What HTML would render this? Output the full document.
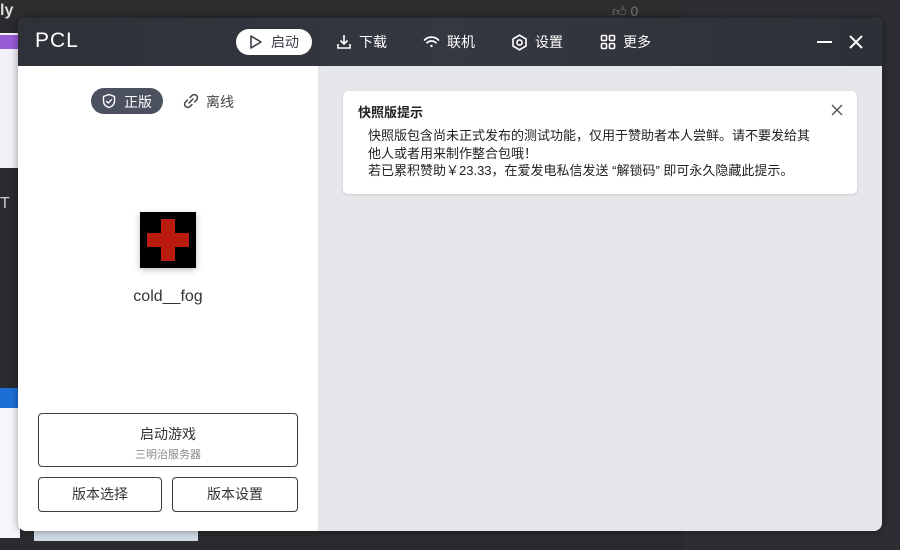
<!DOCTYPE html>
<html><head><meta charset="utf-8"><style>
*{margin:0;padding:0;box-sizing:border-box}
body{width:900px;height:550px;overflow:hidden;background:#2a2b2e;font-family:"Liberation Sans","Noto Sans CJK SC",sans-serif;position:relative}
.abs{position:absolute}
.win{left:18px;top:18px;width:864px;height:513px;border-radius:8px;overflow:hidden;background:#e6e7ea;box-shadow:0 0 8px rgba(0,0,0,.4)}
.title{left:0;top:0;width:864px;height:48px;background:linear-gradient(90deg,#2f3139,#353741 50%,#2e3038)}
.nav{color:#fff;font-size:14px;top:24px;display:flex;align-items:center;gap:7px;height:0}
.left{left:0;top:48px;width:300px;height:465px;background:#fff}
.btn{border:1px solid #3a3d44;border-radius:4px;background:#fff;color:#333;text-align:center;font-size:14px}
</style></head><body>
<div class="abs" style="left:0;top:0;width:900px;height:18px;background:#2d2d2f"></div>
<div class="abs" style="left:0;top:0;color:#ddd;font-weight:bold;font-size:16px;top:2px">ly</div>
<div class="abs" style="left:0;top:33px;width:20px;height:135px;background:#f4f0f8"></div>
<div class="abs" style="left:0;top:35px;width:20px;height:14px;background:#9a5bd6"></div>
<div class="abs" style="left:0;top:195px;color:#ccc;font-size:16px">T</div>
<div class="abs" style="left:0;top:388px;width:20px;height:150px;background:#f4f6fa"></div>
<div class="abs" style="left:0;top:388px;width:20px;height:20px;background:#1b6fd6"></div>
<div class="abs" style="left:34px;top:531px;width:164px;height:10px;background:#cfd9e6"></div>
<div class="abs" style="left:612px;top:3px;color:#777;font-size:14px">👍︎ 0</div>
<div class="abs" style="left:683px;top:0;width:217px;height:550px;background:#2c2e33"></div>

<div class="abs win">
 <div class="abs title">
  <div class="abs" style="left:17px;top:11px;color:#fff;font-size:21px;letter-spacing:1px">PCL</div>
  <div class="abs" style="left:218px;top:11px;width:76px;height:26px;border-radius:13px;background:#fff"></div>
  <div class="abs nav" style="left:230px;color:#3a3d46">
   <svg width="16" height="16" viewBox="0 0 16 16"><path d="M3 2 L13 8 L3 14 Z" fill="none" stroke="#3a3d46" stroke-width="1.6" stroke-linejoin="round"/></svg>启动</div>
  <div class="abs nav" style="left:318px">
   <svg width="16" height="16" viewBox="0 0 16 16" fill="none" stroke="#fff" stroke-width="1.6"><path d="M8 1v9M4.5 6.5 8 10l3.5-3.5M2 10v4h12v-4"/></svg>下载</div>
  <div class="abs nav" style="left:405px">
   <svg width="17" height="16" viewBox="0 0 17 16" fill="none" stroke="#fff" stroke-width="1.7" stroke-linecap="round"><path d="M1.5 6a10 10 0 0 1 14 0M4 8.8a6.5 6.5 0 0 1 9 0"/><circle cx="8.5" cy="12" r="1.2" fill="#fff" stroke="none"/></svg>联机</div>
  <div class="abs nav" style="left:493px">
   <svg width="17" height="17" viewBox="0 0 17 17" fill="none" stroke="#fff" stroke-width="1.6"><path d="M8.5 1.2 15 5v7l-6.5 3.8L2 12V5Z"/><circle cx="8.5" cy="8.5" r="2.6"/></svg>设置</div>
  <div class="abs nav" style="left:582px">
   <svg width="16" height="16" viewBox="0 0 16 16" fill="none" stroke="#fff" stroke-width="1.6"><rect x="1.5" y="1.5" width="5" height="5" rx="1"/><rect x="9.5" y="1.5" width="5" height="5" rx="1"/><rect x="1.5" y="9.5" width="5" height="5" rx="1"/><rect x="9.5" y="9.5" width="5" height="5" rx="1"/></svg>更多</div>
  <div class="abs" style="left:799px;top:23px;width:15px;height:2px;background:#fff"></div>
  <svg class="abs" style="left:831px;top:17px" width="14" height="14" viewBox="0 0 14 14" stroke="#fff" stroke-width="2"><path d="M1 1 13 13M13 1 1 13"/></svg>
 </div>
 <div class="abs left">
  <div class="abs" style="left:73px;top:22px;width:72px;height:26px;border-radius:13px;background:#4c5160"></div>
  <svg class="abs" style="left:83px;top:27px" width="16" height="16" viewBox="0 0 16 16" fill="none" stroke="#fff" stroke-width="1.4"><path d="M8 1.5 13.5 3.5v4.5c0 3.3-2.5 5.5-5.5 6.5-3-1-5.5-3.2-5.5-6.5V3.5Z"/><path d="M5.3 8 7.3 10 10.8 6.3"/></svg>
  <div class="abs" style="left:106px;top:26px;color:#fff;font-size:14px">正版</div>
  <svg class="abs" style="left:165px;top:27px" width="16" height="16" viewBox="0 0 16 16" fill="none" stroke="#444" stroke-width="1.5" stroke-linecap="round"><path d="M7 4.5 9 2.5a3 3 0 0 1 4.5 4.5L11.5 9M9 11.5 7 13.5A3 3 0 0 1 2.5 9L4.5 7M6 10 10 6"/></svg>
  <div class="abs" style="left:188px;top:26px;color:#444;font-size:14px">离线</div>
  <div class="abs" style="left:122px;top:146px;width:56px;height:56px;background:#000;box-shadow:0 2px 6px rgba(0,0,0,.25)"></div>
  <div class="abs" style="left:143px;top:153px;width:14px;height:42px;background:#bb1a0e"></div>
  <div class="abs" style="left:129px;top:167px;width:42px;height:14px;background:#bb1a0e"></div>
  <div class="abs" style="left:0;top:222px;width:300px;text-align:center;color:#333;font-size:16px">cold__fog</div>
  <div class="abs btn" style="left:20px;top:347px;width:260px;height:54px">
   <div style="margin-top:10px">启动游戏</div><div style="font-size:11px;color:#888;margin-top:2px">三明治服务器</div></div>
  <div class="abs btn" style="left:20px;top:411px;width:124px;height:35px;line-height:33px">版本选择</div>
  <div class="abs btn" style="left:154px;top:411px;width:126px;height:35px;line-height:33px">版本设置</div>
 </div>
 <div class="abs" style="left:325px;top:73px;width:514px;height:103px;background:#fff;border-radius:5px;box-shadow:0 1px 3px rgba(0,0,0,.12)">
  <div class="abs" style="left:15px;top:11px;font-size:13px;font-weight:bold;color:#222">快照版提示</div>
  <svg class="abs" style="left:488px;top:13px" width="12" height="12" viewBox="0 0 12 12" stroke="#555" stroke-width="1.4"><path d="M1 1 11 11M11 1 1 11"/></svg>
  <div class="abs" style="left:25px;top:36px;width:486px;font-size:13px;line-height:17.5px;color:#222;white-space:nowrap">快照版包含尚未正式发布的测试功能，仅用于赞助者本人尝鲜。请不要发给其<br>他人或者用来制作整合包哦！<br>若已累积赞助￥23.33，在爱发电私信发送 “解锁码” 即可永久隐藏此提示。</div>
 </div>
</div>
</body></html>
